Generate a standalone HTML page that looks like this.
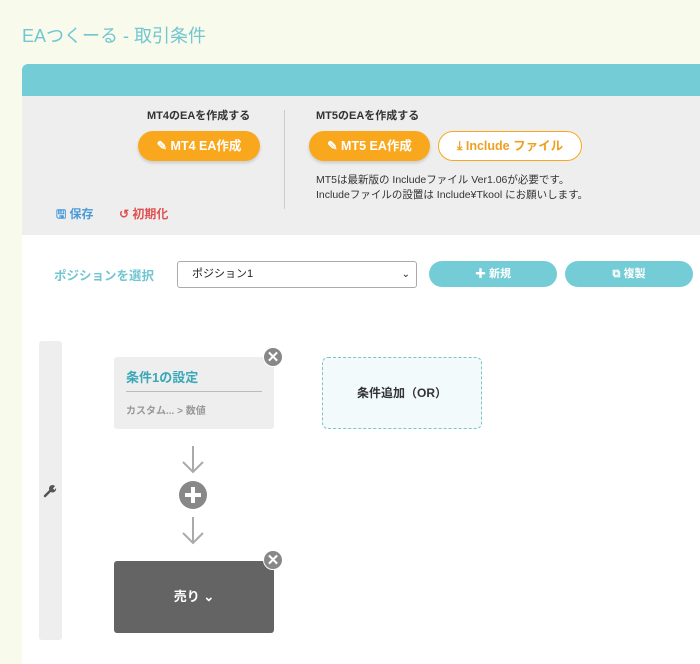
<!DOCTYPE html>
<html><head><meta charset="utf-8"><style>
*{box-sizing:border-box;margin:0;padding:0}
body{width:700px;height:653px;overflow:hidden;background:#f8faec;font-family:"Liberation Sans","Noto Sans CJK JP",sans-serif;position:relative}
.a{position:absolute}
.title{left:22px;top:22px;font-size:18px;color:#72c6d1}
.card{left:22px;top:64px;width:700px;height:600px;background:#fff;border-radius:6px 0 0 0;overflow:hidden}
.hdr{left:0;top:0;width:700px;height:32px;background:#74cdd6}
.gray{left:0;top:32px;width:700px;height:139px;background:#eeeeee}
.lab{font-size:11px;font-weight:bold;color:#333}
.ob{height:30px;border-radius:15px;background:#f9a81e;color:#fff;font-size:12.5px;font-weight:bold;text-align:center;line-height:30px;box-shadow:0 2px 3px rgba(0,0,0,.15)}
.wb{height:30px;border-radius:15px;background:#fff;border:1px solid #f9a81e;color:#f0a020;font-size:12.5px;font-weight:bold;text-align:center;line-height:28px}
.note{font-size:10.5px;color:#333;line-height:15px}
.tb{height:26px;border-radius:13px;background:#74cdd6;color:#fff;font-size:11px;font-weight:bold;text-align:center;line-height:26px}
.x{width:20px;height:20px;border-radius:50%;background:#888;color:#fff;font-size:15px;font-weight:bold;text-align:center;line-height:20px;border:1px solid #fff}
</style></head><body>
<div class="a title">EAつくーる - 取引条件</div>
<div class="a card">
 <div class="a hdr"></div>
 <div class="a gray">
  <div class="a lab" style="left:125px;top:11px">MT4のEAを作成する</div>
  <div class="a ob" style="left:116px;top:35px;width:122px">✎ MT4 EA作成</div>
  <div class="a" style="left:262px;top:14px;width:1px;height:99px;background:#ccc"></div>
  <div class="a lab" style="left:294px;top:11px">MT5のEAを作成する</div>
  <div class="a ob" style="left:287px;top:35px;width:121px">✎ MT5 EA作成</div>
  <div class="a wb" style="left:416px;top:35px;width:144px">⤓ Include ファイル</div>
  <div class="a note" style="left:294px;top:77px">MT5は最新版の Includeファイル Ver1.06が必要です。<br>Includeファイルの設置は Include¥Tkool にお願いします。</div>
  <div class="a" style="left:34px;top:109px;font-size:12px;font-weight:bold;color:#4a9ad8">🖫 保存</div>
  <div class="a" style="left:97px;top:109px;font-size:12px;font-weight:bold;color:#e05050">↺ 初期化</div>
 </div>
 <div class="a" style="left:32px;top:201px;font-size:12.5px;font-weight:bold;color:#72c6d1">ポジションを選択</div>
 <div class="a" style="left:155px;top:197px;width:240px;height:27px;border:1px solid #aaa;border-radius:3px;background:#fff;font-size:11px;line-height:25px;padding-left:14px;color:#222">ポジション1<span style="position:absolute;right:6px;font-size:10px">⌄</span></div>
 <div class="a tb" style="left:407px;top:197px;width:128px">✚ 新規</div>
 <div class="a tb" style="left:543px;top:197px;width:128px">⧉ 複製</div>
 <div class="a" style="left:17px;top:277px;width:23px;height:299px;background:#eee;border-radius:3px"></div>
 <svg class="a" style="left:21px;top:420px" width="14" height="14" viewBox="0 0 14 14"><path d="M2 12L8 6" stroke="#555" stroke-width="2.5" stroke-linecap="round"/><path d="M7 7A3.5 3.5 0 0 1 12 2L10 4.5L11.5 6L13 4A3.5 3.5 0 0 1 8 8Z" fill="#555"/></svg>
 <div class="a" style="left:92px;top:293px;width:160px;height:72px;background:#eee;border-radius:3px"></div>
 <div class="a" style="left:104px;top:303px;font-size:13px;font-weight:bold;color:#3aa8b8">条件1の設定</div>
 <div class="a" style="left:104px;top:327px;width:136px;height:1px;background:#bbb"></div>
 <div class="a" style="left:104px;top:338px;font-size:10px;font-weight:bold;color:#999">カスタム... &gt; 数値</div>
 <div class="a x" style="left:241px;top:283px">✕</div>
 <div class="a" style="left:300px;top:293px;width:160px;height:72px;background:#f2fafc;border:1px dashed #7cc6c8;border-radius:6px;text-align:center;line-height:70px;font-size:12px;font-weight:bold;color:#333">条件追加（OR）</div>
 <svg class="a" style="left:155px;top:380px" width="32" height="120"><g stroke="#aaa" stroke-width="2" fill="none"><path d="M16 2V28M6 18L16 28L26 18"/><path d="M16 73V99M6 89L16 99L26 89"/></g><circle cx="16" cy="51" r="14" fill="#888"/><path d="M16 43V59M8 51H24" stroke="#fff" stroke-width="4"/></svg>
 <div class="a" style="left:92px;top:497px;width:160px;height:72px;background:#646464;border-radius:3px;text-align:center;line-height:72px;color:#fff;font-size:13px;font-weight:bold">売り ⌄</div>
 <div class="a x" style="left:241px;top:486px">✕</div>
</div>
</body></html>
